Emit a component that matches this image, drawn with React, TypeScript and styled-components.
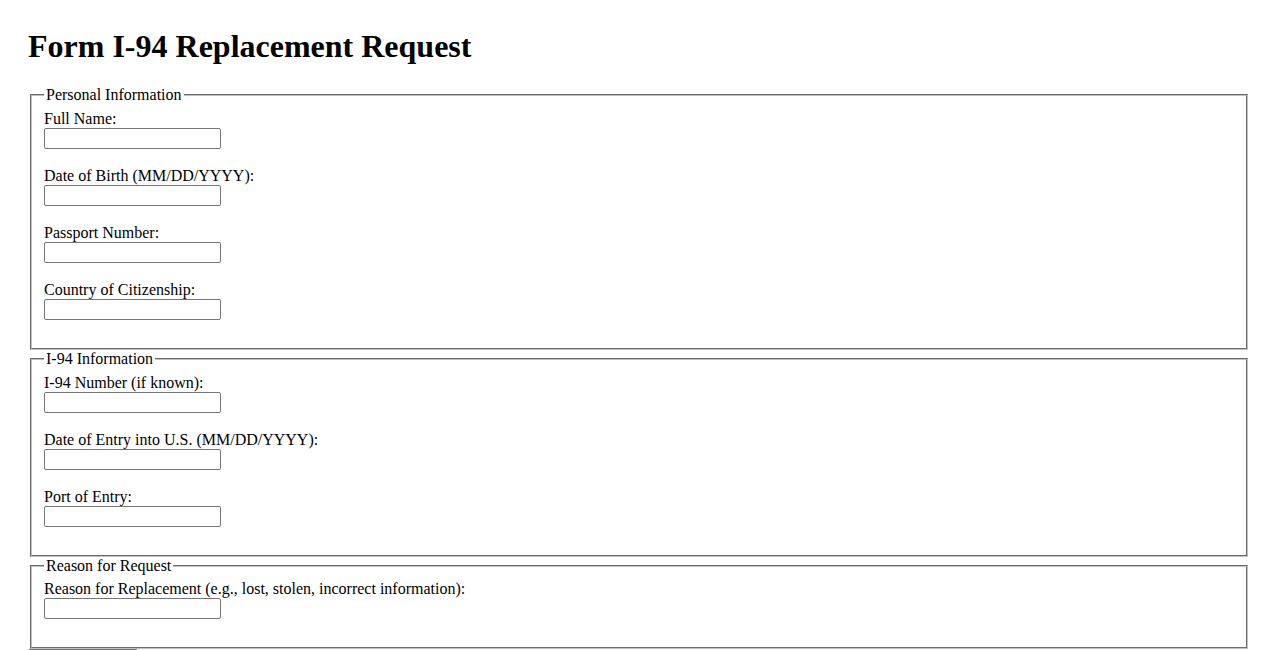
import React from 'react'
import styled, { createGlobalStyle } from 'styled-components'

const GlobalStyle = createGlobalStyle`
  html, body {
    margin: 0;
    padding: 0;
    background: #fff;
  }
  body {
    font-family: "Liberation Serif", "Times New Roman", serif;
    font-size: 16px;
    color: #000;
  }
`

const Page = styled.div`
  padding: 28px;
`

const Title = styled.h1`
  font-size: 32px;
  font-weight: bold;
  margin: 0 0 21.44px 0;
`

const Form = styled.form`
  margin: 0;
`

const Section = styled.fieldset`
  margin: 0 2px;
  padding: 5.6px 12px 10px;
  border: 2px groove rgb(192, 192, 192);
  min-inline-size: min-content;
`

const Legend = styled.legend`
  padding: 0 2px;
  font-size: 16px;
`

const Field = styled.div`
  margin-bottom: 18px;
`

const Label = styled.label`
  display: block;
`

const TextInput = styled.input`
  display: block;
  box-sizing: border-box;
  width: 177px;
  height: 21px;
  margin: 0;
  padding: 1px 2px;
  border: 1px solid #767676;
  border-radius: 2px;
  background: #fff;
  font-family: "Liberation Sans", Arial, sans-serif;
  font-size: 13.33px;
`

const SubmitButton = styled.button`
  margin: 0;
  padding: 1px 6px;
  border: 1px solid #767676;
  border-radius: 2px;
  background: #efefef;
  font-family: "Liberation Sans", Arial, sans-serif;
  font-size: 13.33px;
  width: 110px;
  height: 21px;
`

type FieldDef = { id: string; label: string }

const sections: { legend: string; fields: FieldDef[] }[] = [
  {
    legend: 'Personal Information',
    fields: [
      { id: 'fullName', label: 'Full Name:' },
      { id: 'dob', label: 'Date of Birth (MM/DD/YYYY):' },
      { id: 'passport', label: 'Passport Number:' },
      { id: 'citizenship', label: 'Country of Citizenship:' },
    ],
  },
  {
    legend: 'I-94 Information',
    fields: [
      { id: 'i94Number', label: 'I-94 Number (if known):' },
      { id: 'entryDate', label: 'Date of Entry into U.S. (MM/DD/YYYY):' },
      { id: 'port', label: 'Port of Entry:' },
    ],
  },
  {
    legend: 'Reason for Request',
    fields: [{ id: 'reason', label: 'Reason for Replacement (e.g., lost, stolen, incorrect information):' }],
  },
]

export default function App() {
  return (
    <>
      <GlobalStyle />
      <Page>
        <Title>Form I-94 Replacement Request</Title>
        <Form onSubmit={(e) => e.preventDefault()}>
          {sections.map((section) => (
            <Section key={section.legend}>
              <Legend>{section.legend}</Legend>
              {section.fields.map((field) => (
                <Field key={field.id}>
                  <Label htmlFor={field.id}>{field.label}</Label>
                  <TextInput type="text" id={field.id} name={field.id} />
                </Field>
              ))}
            </Section>
          ))}
          <SubmitButton type="submit">Submit Request</SubmitButton>
        </Form>
      </Page>
    </>
  )
}
